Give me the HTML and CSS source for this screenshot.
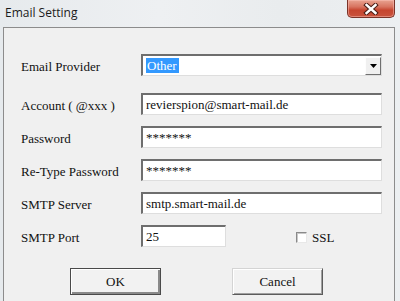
FILE: index.html
```html
<!DOCTYPE html>
<html lang="en">
<head>
    <meta charset="UTF-8">
    <meta name="viewport" content="width=device-width, initial-scale=1.0">
    <title>Email Setting</title>
    <link rel="stylesheet" href="styles.css">
</head>
<body>
    <div class="window">
        <div class="titlebar">
            <span class="title">Email Setting</span>
            <button class="close" aria-label="Close">
                <svg width="16" height="12" viewBox="0 0 16 12">
                    <path d="M3.5 2 L12.5 10 M12.5 2 L3.5 10" stroke="#4a1d16" stroke-width="4.4" stroke-linecap="square" fill="none"/>
                    <path d="M3.5 2 L12.5 10 M12.5 2 L3.5 10" stroke="#fff" stroke-width="2.4" stroke-linecap="square" fill="none"/>
                </svg>
            </button>
        </div>

        <div class="client">
            <div class="form">
                <div class="row row-first">
                    <label>Email Provider</label>
                    <div class="field combo">
                        <span class="selected">Other</span>
                        <span class="drop">
                            <svg width="7" height="4" viewBox="0 0 7 4"><path d="M0 0 H7 L3.5 4 Z" fill="#000"/></svg>
                        </span>
                    </div>
                </div>
                <div class="row">
                    <label>Account ( @xxx )</label>
                    <input class="field" type="text" value="revierspion@smart-mail.de">
                </div>
                <div class="row">
                    <label>Password</label>
                    <input class="field" type="text" value="*******">
                </div>
                <div class="row">
                    <label>Re-Type Password</label>
                    <input class="field" type="text" value="*******">
                </div>
                <div class="row">
                    <label>SMTP Server</label>
                    <input class="field" type="text" value="smtp.smart-mail.de">
                </div>
                <div class="row">
                    <label>SMTP Port</label>
                    <div class="port-line">
                        <input class="field port" type="text" value="25">
                        <label class="check"><span class="box"></span>SSL</label>
                    </div>
                </div>
            </div>

            <div class="actions">
                <button class="btn btn-default">OK</button>
                <button class="btn">Cancel</button>
            </div>
        </div>
    </div>
</body>
</html>
```

FILE: styles.css
```css
body {
    margin: 0;
    font-family: 'Liberation Serif', 'Times New Roman', serif;
    font-size: 13px;
    color: #111;
}
.window {
    width: 400px;
    height: 301px;
    overflow: hidden;
    background: linear-gradient(90deg, #e6eaed 0%, #eef0f2 40%, #e9ecee 70%, #eceff1 100%);
}
.titlebar {
    display: flex;
    align-items: flex-start;
    height: 27px;
    padding-left: 5px;
}
.title {
    font-family: 'Open Sans', 'Noto Sans', sans-serif;
    font-size: 12px;
    line-height: 16px;
    padding-top: 5px;
    color: #1b1b1b;
}
.close {
    margin-left: auto;
    margin-right: 5px;
    width: 48px;
    height: 18px;
    padding: 0;
    border: 1px solid #7a3328;
    border-top: none;
    border-radius: 0 0 5px 5px;
    background: linear-gradient(#e9a391 0%, #d87460 40%, #c6452f 60%, #c9533d 100%);
    box-shadow: inset 0 0 0 1px rgba(255, 200, 190, 0.45);
    display: flex;
    align-items: center;
    justify-content: center;
}
.client {
    margin: 0 5px 0 3px;
    height: 300px;
    border: 1px solid #8c8c8c;
    background: #f0f0f0;
    padding: 26px 0 0 17px;
}
.form {
    display: flex;
    flex-direction: column;
    gap: 11px;
}
.row {
    display: grid;
    grid-template-columns: 120px 241px;
    align-items: center;
    height: 22px;
}
.row > label {
    padding-top: 3px;
}
.row-first {
    margin-bottom: 6px;
}
.field {
    box-sizing: border-box;
    height: 22px;
    margin: 0;
    padding: 0 3px;
    border-top: 2px solid #6e6e6e;
    border-left: 2px solid #6e6e6e;
    border-right: 1px solid #dedede;
    border-bottom: 1px solid #dedede;
    background: #fff;
    font-family: 'Liberation Serif', 'Times New Roman', serif;
    font-size: 13px;
    color: #111;
    outline: none;
}
.combo {
    display: flex;
    align-items: center;
    padding: 0 0 0 3px;
}
.selected {
    background: #3399ff;
    color: #fff;
    padding: 0 2px 0 1px;
    line-height: 15px;
}
.drop {
    margin-left: auto;
    width: 16px;
    height: 18px;
    box-sizing: border-box;
    border: 1px solid;
    border-color: #fdfdfd #707070 #707070 #fdfdfd;
    background: #f0f0f0;
    display: flex;
    align-items: center;
    justify-content: center;
}
.port-line {
    display: flex;
    align-items: center;
}
.port {
    width: 85px;
}
.check {
    display: flex;
    align-items: center;
    gap: 5px;
    margin-left: 70px;
    margin-top: 3px;
}
.box {
    width: 11px;
    height: 11px;
    box-sizing: border-box;
    border: 1px solid;
    border-color: #8a8a8a #e8e8e8 #e8e8e8 #8a8a8a;
    box-shadow: inset 1px 1px #c8c8c8;
    background: #fff;
}
.actions {
    display: flex;
    gap: 71px;
    margin: 21px 0 0 49px;
}
.btn {
    width: 91px;
    height: 27px;
    padding: 0;
    border: 1px solid;
    border-color: #d4d4d4 #5c5c5c #5c5c5c #d4d4d4;
    box-shadow: inset 1px 1px #fff, inset -1px -1px #a0a0a0;
    background: #f2f2f2;
    font-family: 'Liberation Serif', 'Times New Roman', serif;
    font-size: 13px;
    color: #111;
}
.btn-default {
    border-color: #4a4a4a;
    box-shadow: inset 1px 1px #fff, inset -2px -2px #8a8a8a;
}
```
